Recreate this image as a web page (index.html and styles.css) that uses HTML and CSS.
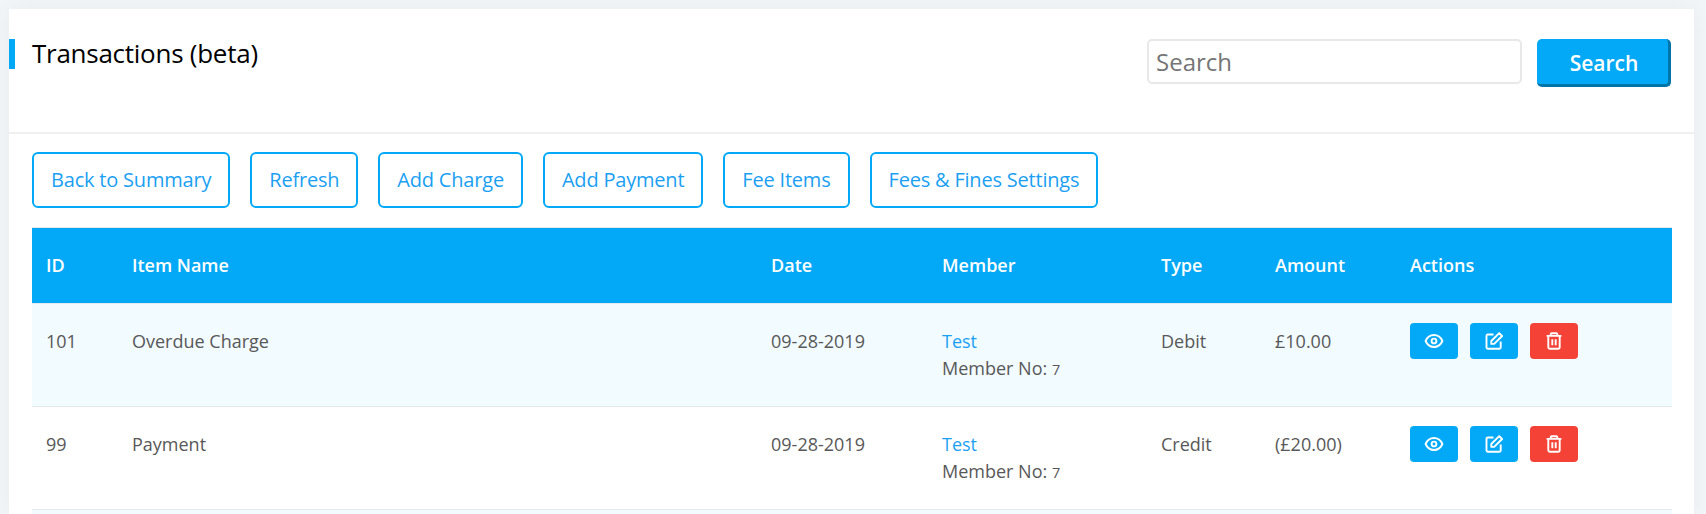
FILE: index.html
```
<!DOCTYPE html>
<html lang="en">
<head>
<meta charset="utf-8">
<title>Transactions</title>
<link rel="stylesheet" href="styles.css">
</head>
<body>
<svg class="sprite" aria-hidden="true">
  <symbol id="eye" viewBox="0 0 20 20"><path d="M1.600 10C3.200 6.300 6.200 4 10 4s6.800 2.300 8.400 6c-1.600 3.700-4.600 6-8.400 6s-6.800-2.300-8.400-6z"/><circle cx="10" cy="10" r="2.400"/></symbol>
  <symbol id="edit" viewBox="0 0 20 20"><path d="M9.500 3.500H3.700a1.200 1.200 0 0 0-1.200 1.200v11.800a1.200 1.200 0 0 0 1.200 1.200h11.800a1.200 1.200 0 0 0 1.200-1.200V10.500"/><path d="M7.300 12.900V10l7.900-7.900 2.900 2.900-7.900 7.900z"/></symbol>
  <symbol id="trash" viewBox="0 0 20 20"><path d="M2.600 4.900h14.800M6.700 4.700V3.300a1 1 0 0 1 1-1h4.600a1 1 0 0 1 1 1v1.400M4.300 5v11.300a1.500 1.500 0 0 0 1.500 1.500h8.400a1.500 1.500 0 0 0 1.500-1.500V5M8.300 8.200v6M11.700 8.200v6"/></symbol>
</svg>
<main class="card">
  <header class="card-header">
    <h1 class="title">Transactions (beta)</h1>
    <form class="search">
      <input class="search-input" type="text" placeholder="Search">
      <button class="search-button" type="button">Search</button>
    </form>
  </header>
  <div class="card-body">
    <nav class="toolbar">
      <a class="tool">Back to Summary</a>
      <a class="tool">Refresh</a>
      <a class="tool">Add Charge</a>
      <a class="tool">Add Payment</a>
      <a class="tool">Fee Items</a>
      <a class="tool">Fees &amp; Fines Settings</a>
    </nav>
    <table class="grid">
      <colgroup><col class="c-id"><col class="c-item"><col class="c-date"><col class="c-member"><col class="c-type"><col class="c-amount"><col class="c-actions"></colgroup>
      <thead>
        <tr><th>ID</th><th>Item Name</th><th>Date</th><th>Member</th><th>Type</th><th>Amount</th><th>Actions</th></tr>
      </thead>
      <tbody>
        <tr>
          <td>101</td><td>Overdue Charge</td><td>09-28-2019</td>
          <td><a class="link">Test</a><br>Member No: <small class="number">7</small></td>
          <td>Debit</td><td>£10.00</td>
          <td class="actions-cell"><div class="actions">
            <a class="action"><svg class="icon"><use href="#eye"/></svg></a>
            <a class="action"><svg class="icon"><use href="#edit"/></svg></a>
            <a class="action danger"><svg class="icon"><use href="#trash"/></svg></a>
          </div></td>
        </tr>
        <tr>
          <td>99</td><td>Payment</td><td>09-28-2019</td>
          <td><a class="link">Test</a><br>Member No: <small class="number">7</small></td>
          <td>Credit</td><td>(£20.00)</td>
          <td class="actions-cell"><div class="actions">
            <a class="action"><svg class="icon"><use href="#eye"/></svg></a>
            <a class="action"><svg class="icon"><use href="#edit"/></svg></a>
            <a class="action danger"><svg class="icon"><use href="#trash"/></svg></a>
          </div></td>
        </tr>
      </tbody>
    </table>
    <div class="next-row"></div>
  </div>
</main>
</body>
</html>
```
FILE: styles.css
```
* { box-sizing: border-box; }
html, body { height: 514px; overflow: hidden; }
body {
  margin: 0;
  padding: 9px 12px 0 9px;
  background: #f1f5f8;
  color: #585858;
  font-family: "Open Sans", sans-serif;
  font-size: 18px;
  line-height: 27px;
}
.sprite { display: none; }
.card {
  height: 505px;
  background: #fff;
  box-shadow: 0 0 20px rgba(0, 0, 0, 0.04);
}
.card-header {
  display: flex;
  justify-content: space-between;
  align-items: flex-start;
  height: 125px;
  padding: 30px 23px 0 0;
  border-bottom: 2px solid #f0f0f0;
}
.title {
  margin: 0;
  padding-left: 17px;
  border-left: 6px solid #03a9f7;
  color: #000;
  font-size: 26px;
  font-weight: 400;
  letter-spacing: -0.26px;
  line-height: 28px;
  height: 30px;
}
.search { display: flex; gap: 15px; align-items: flex-start; }
.search-input {
  width: 375px;
  height: 45px;
  padding: 0 7px;
  border: 2px solid #e8e8e8;
  border-radius: 5px;
  background: #fff;
  font-family: inherit;
  font-size: 24px;
}
.search-input::placeholder { color: #757575; }
.search-button {
  width: 134px;
  height: 48px;
  padding: 2px 0 0 3px;
  border: 0 solid #0275a8;
  border-width: 0 3px 3px 0;
  border-radius: 5px;
  background: #03a9f7;
  color: #fff;
  font-family: inherit;
  font-size: 21px;
  font-weight: 600;
}
.card-body { padding: 18px 22px 0 23px; }
.toolbar { display: flex; gap: 20px; margin-bottom: 19px; }
.tool {
  height: 56px;
  padding: 0 17px;
  border: 2px solid #03a9f7;
  border-radius: 6px;
  color: #1b9ff3;
  font-size: 20px;
  letter-spacing: -0.2px;
  line-height: 52px;
  white-space: nowrap;
}
.grid {
  width: 1640px;
  table-layout: fixed;
  border-spacing: 0;
}
.c-id { width: 86px; }
.c-item { width: 639px; }
.c-date { width: 171px; }
.c-member { width: 219px; }
.c-type { width: 114px; }
.c-amount { width: 135px; }
.c-actions { width: 276px; }
.grid th, .grid td {
  padding: 24px 14px 0;
  border-top: 1px solid #e6e9eb;
  text-align: left;
  vertical-align: top;
}
.grid th {
  height: 76px;
  background: #03a9f7;
  background-clip: padding-box;
  color: #fff;
  font-weight: 600;
}
.grid td { height: 103px; }
.grid tbody tr:nth-child(odd) td { background: #f2fbff; }
.next-row { height: 5px; border-top: 1px solid #e6e9eb; background: #f2fbff; }
.link { color: #1b9ff3; }
.number { font-size: 14.4px; line-height: 1; }
.grid .actions-cell { padding-top: 19px; }
.actions { display: flex; gap: 12px; }
.action {
  display: flex;
  align-items: center;
  justify-content: center;
  width: 48px;
  height: 36px;
  border-radius: 4px;
  background: #03a9f7;
}
.danger { background: #f44336; }
.icon {
  width: 20px;
  height: 20px;
  fill: none;
  stroke: #fff;
  stroke-width: 1.9;
  stroke-linejoin: round;
}
```
